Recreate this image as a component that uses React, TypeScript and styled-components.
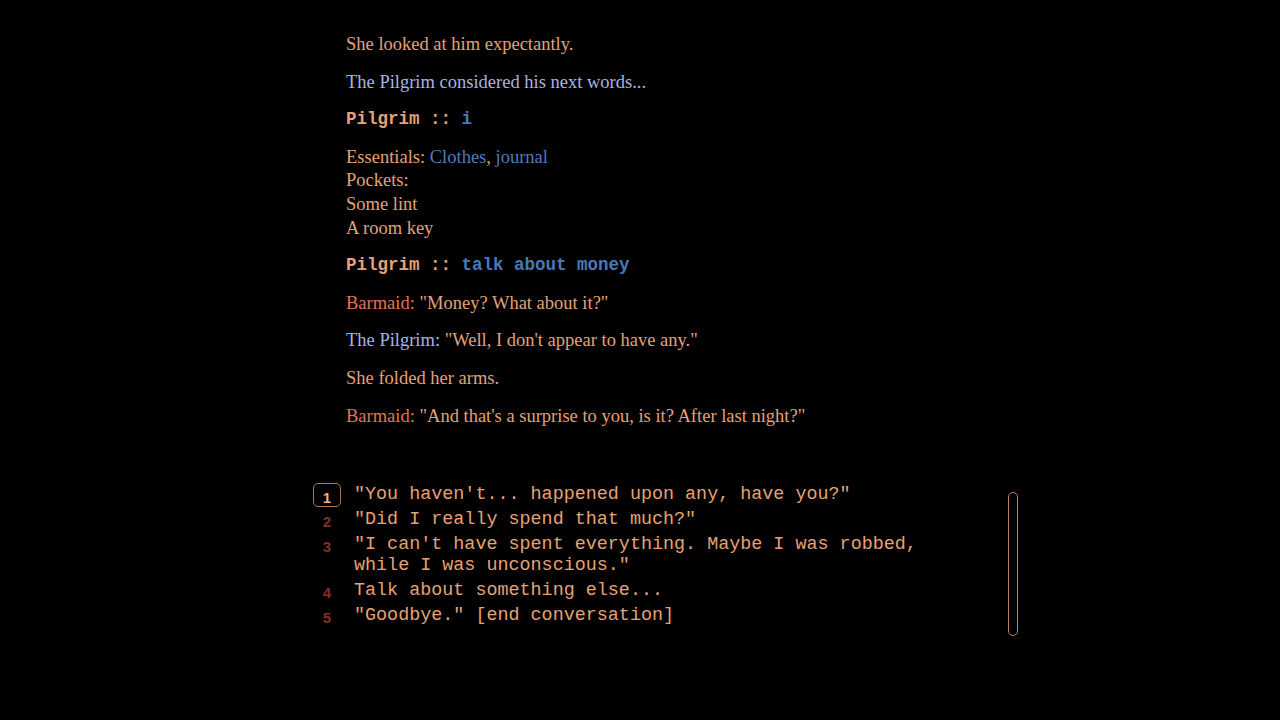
import React from "react";
import styled, { createGlobalStyle } from "styled-components";

const Global = createGlobalStyle`
  html, body { margin: 0; padding: 0; background: #000; }
  body { width: 1280px; height: 720px; overflow: hidden; }
`;

const Page = styled.div`
  display: flex;
  flex-direction: column;
  padding: 33px 0 0 313px;
  height: 720px;
  box-sizing: border-box;
  background: #000;
`;

const Story = styled.div`
  display: flex;
  flex-direction: column;
  gap: 14px;
  padding-left: 33px;
  font-family: "Liberation Serif", "Times New Roman", serif;
  font-size: 18.5px;
  line-height: 23.6px;
  color: #e2a27a;
`;

const Para = styled.div<{ $tone?: "narr" | "pilgrim" }>`
  color: ${(p) => (p.$tone === "pilgrim" ? "#aab2e2" : "#e2a27a")};
`;

const Speaker = styled.span<{ $who: "barmaid" | "pilgrim" }>`
  color: ${(p) => (p.$who === "barmaid" ? "#e2735a" : "#aab2e2")};
`;

const Item = styled.span`
  color: #4f7cb8;
`;

const Prompt = styled.div`
  font-family: "Liberation Mono", "Courier New", monospace;
  font-weight: bold;
  font-size: 17.5px;
  line-height: 23.6px;
  color: #e6a272;
  white-space: pre;
`;

const Command = styled.span`
  color: #4a78b8;
`;

const ChoicesArea = styled.div`
  display: flex;
  align-items: flex-start;
  margin-top: 56px;
  width: 705px;
`;

const ChoiceList = styled.div`
  display: flex;
  flex-direction: column;
  gap: 4px;
  flex: 1;
`;

const ChoiceRow = styled.div`
  display: flex;
  align-items: flex-start;
  gap: 13px;
`;

const Num = styled.div<{ $active?: boolean }>`
  width: 28px;
  height: ${(p) => (p.$active ? "24px" : "21px")};
  margin-top: ${(p) => (p.$active ? "-1px" : "0")};
  margin-bottom: ${(p) => (p.$active ? "-2px" : "0")};
  box-sizing: border-box;
  display: flex;
  align-items: center;
  justify-content: center;
  font-family: "Liberation Sans", Arial, sans-serif;
  font-weight: bold;
  font-size: 15px;
  padding-top: 4px;
  color: ${(p) => (p.$active ? "#f2b276" : "#80302a")};
  border: ${(p) => (p.$active ? "1.5px solid #a87658" : "1.5px solid transparent")};
  border-radius: 5px;
  flex-shrink: 0;
`;

const ChoiceText = styled.div`
  width: 600px;
  font-family: "Liberation Mono", "Courier New", monospace;
  font-size: 18.4px;
  line-height: 21px;
  color: #e6a272;
`;

const Scrollbar = styled.div`
  width: 10px;
  height: 144px;
  margin-top: 8px;
  margin-left: auto;
  box-sizing: border-box;
  border: 1.5px solid #b8805c;
  border-radius: 6px;
`;

const choices = [
  '"You haven\'t... happened upon any, have you?"',
  '"Did I really spend that much?"',
  '"I can\'t have spent everything. Maybe I was robbed, while I was unconscious."',
  "Talk about something else...",
  '"Goodbye." [end conversation]',
];

export default function App() {
  return (
    <>
      <Global />
      <Page>
        <Story>
          <Para>She looked at him expectantly.</Para>
          <Para $tone="pilgrim">The Pilgrim considered his next words...</Para>
          <Prompt>
            Pilgrim :: <Command>i</Command>
          </Prompt>
          <Para>
            Essentials: <Item>Clothes</Item>, <Item>journal</Item>
            <br />
            Pockets:
            <br />
            Some lint
            <br />A room key
          </Para>
          <Prompt>
            Pilgrim :: <Command>talk about money</Command>
          </Prompt>
          <Para>
            <Speaker $who="barmaid">Barmaid:</Speaker> "Money? What about it?"
          </Para>
          <Para>
            <Speaker $who="pilgrim">The Pilgrim:</Speaker> "Well, I don't appear to have any."
          </Para>
          <Para>She folded her arms.</Para>
          <Para>
            <Speaker $who="barmaid">Barmaid:</Speaker> "And that's a surprise to you, is it? After last night?"
          </Para>
        </Story>
        <ChoicesArea>
          <ChoiceList>
            {choices.map((c, i) => (
              <ChoiceRow key={i}>
                <Num $active={i === 0}>{i + 1}</Num>
                <ChoiceText>{c}</ChoiceText>
              </ChoiceRow>
            ))}
          </ChoiceList>
          <Scrollbar />
        </ChoicesArea>
      </Page>
    </>
  );
}
